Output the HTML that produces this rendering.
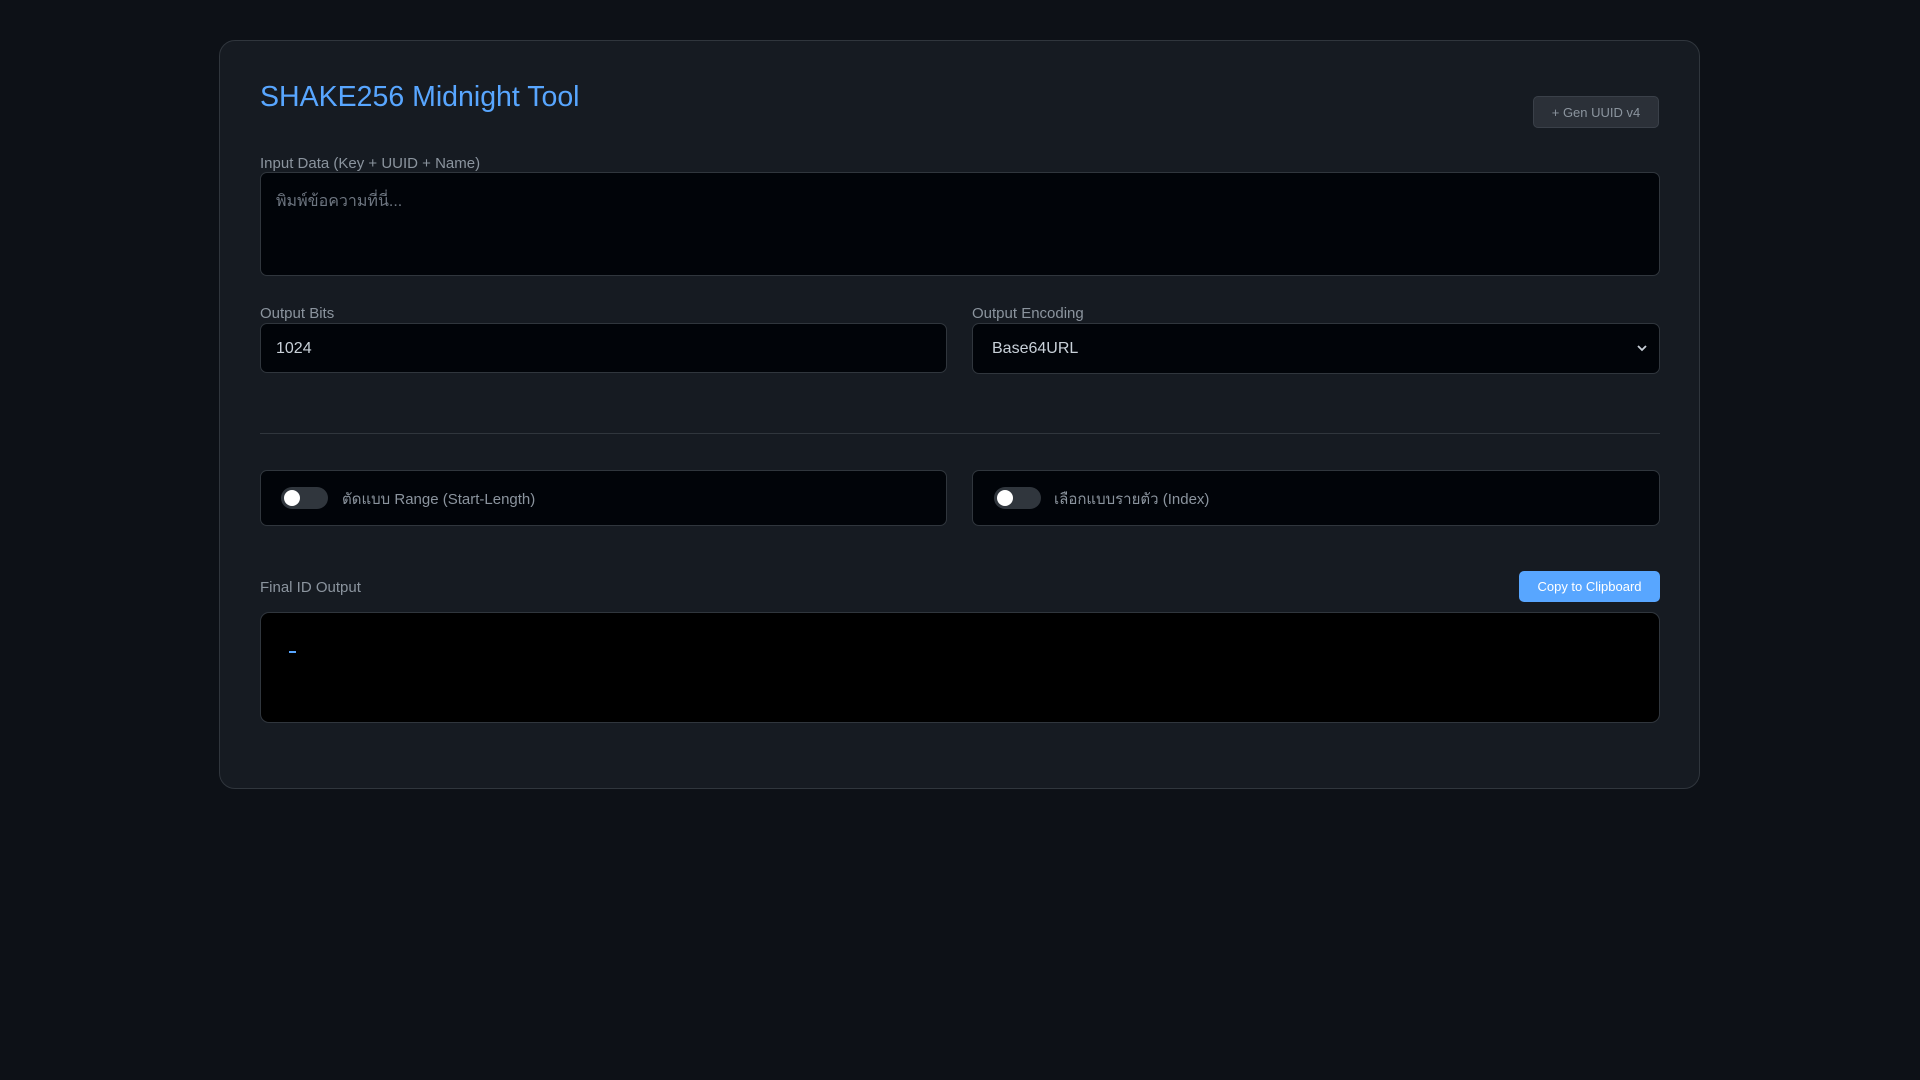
<!DOCTYPE html>
<html><head><meta charset="utf-8"><style>
*{box-sizing:border-box;margin:0;padding:0}
body{width:1920px;height:1080px;background:#0d1117;font-family:"Liberation Sans","Noto Sans CJK SC",sans-serif;position:relative;overflow:hidden}
.card{position:absolute;left:219px;top:40px;width:1481px;height:749px;background:#161b22;border:1px solid #30363d;border-radius:16px}
.a{position:absolute}
.lbl{color:#8b949e;font-size:15px}
.box{background:#010409;border:1px solid #30363d;border-radius:7px}
.sw{width:47px;height:22px;border-radius:11px;background:#30363d}
.sw::after{content:"";position:absolute;left:3px;top:3px;width:16px;height:16px;border-radius:50%;background:#fff}
</style></head><body>
<div class="card"></div>
<div class="a" style="left:260px;top:81px;font-size:28.5px;color:#58a6ff">SHAKE256 Midnight Tool</div>
<div class="a" style="left:1533px;top:96px;width:126px;height:32px;background:#2b3038;border:1px solid #3a4049;border-radius:5px;color:#8b949e;font-size:13px;line-height:31px;text-align:center">+ Gen UUID v4</div>
<div class="a lbl" style="left:260px;top:155px">Input Data (Key + UUID + Name)</div>
<div class="a box" style="left:260px;top:172px;width:1400px;height:104px"><div style="position:absolute;left:15px;top:16px;color:#6e7681;font-size:16px">พิมพ์ข้อความที่นี่...</div></div>
<div class="a lbl" style="left:260px;top:305px">Output Bits</div>
<div class="a lbl" style="left:972px;top:305px">Output Encoding</div>
<div class="a box" style="left:260px;top:323px;width:687px;height:50px;color:#c9d1d9;font-size:16px;line-height:49px;padding-left:15px">1024</div>
<div class="a box" style="left:972px;top:323px;width:688px;height:51px;color:#c9d1d9;font-size:16px;line-height:49px;padding-left:19px">Base64URL<svg style="position:absolute;right:12px;top:20px" width="10" height="8" viewBox="0 0 10 8"><path d="M1 2l4 4 4-4" stroke="#c9d1d9" stroke-width="1.8" fill="none"/></svg></div>
<div class="a" style="left:260px;top:433px;width:1400px;height:1px;background:#30363d"></div>
<div class="a box" style="left:260px;top:470px;width:687px;height:56px"></div>
<div class="a box" style="left:972px;top:470px;width:688px;height:56px"></div>
<div class="a sw" style="left:281px;top:487px"></div>
<div class="a sw" style="left:994px;top:487px"></div>
<div class="a lbl" style="left:342px;top:487px;color:#8b949e">ตัดแบบ Range (Start-Length)</div>
<div class="a lbl" style="left:1054px;top:487px;color:#8b949e">เลือกแบบรายตัว (Index)</div>
<div class="a lbl" style="left:260px;top:579px">Final ID Output</div>
<div class="a" style="left:1519px;top:571px;width:141px;height:31px;background:#58a6ff;border-radius:5px;color:#fff;font-size:13px;line-height:31px;text-align:center">Copy to Clipboard</div>
<div class="a" style="left:260px;top:612px;width:1400px;height:111px;background:#000;border:1px solid #30363d;border-radius:9px"></div>
<div class="a" style="left:289px;top:651px;width:7px;height:2px;background:#58a6ff"></div>
</body></html>
